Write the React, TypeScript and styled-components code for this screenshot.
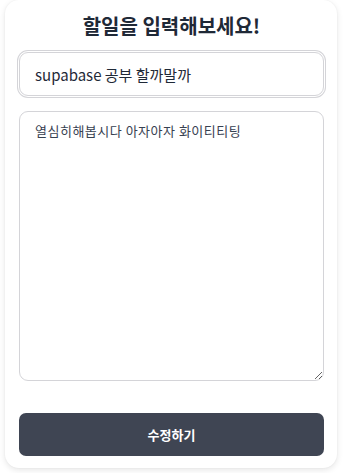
import React from "react";
import styled, { createGlobalStyle } from "styled-components";

const Global = createGlobalStyle`
  html, body { margin: 0; padding: 0; background: #ffffff; }
  body { font-family: "Noto Sans CJK KR", "Noto Sans", sans-serif; }
  * { box-sizing: border-box; }
`;

const Page = styled.div`
  padding: 0 7px 5px 5px;
`;

const Card = styled.form`
  display: flex;
  flex-direction: column;
  background: #ffffff;
  border-radius: 14px;
  box-shadow: 0 2px 6px rgba(0, 0, 0, 0.1), 0 0 2px rgba(0, 0, 0, 0.05);
  padding: 12px 13px 12px 14px;
`;

const Title = styled.h1`
  margin: 0 0 12px;
  font-size: 20px;
  line-height: 28px;
  font-weight: 700;
  color: #1f2937;
  text-align: center;
`;

const TitleInput = styled.input`
  height: 44px;
  width: 100%;
  border: 1px solid #d4d4d8;
  border-radius: 9px;
  padding: 0 15px;
  font-family: inherit;
  font-size: 15px;
  color: #1f2937;
  outline: none;
  box-shadow: 0 0 0 1px #ffffff, 0 0 0 2px #d4d4d8;
`;

const Body = styled.textarea`
  margin-top: 15px;
  height: 270px;
  width: 100%;
  border: 1px solid #d4d4d8;
  border-radius: 9px;
  padding: 10px 15px;
  font-family: inherit;
  font-size: 13px;
  letter-spacing: 0.5px;
  line-height: 18px;
  color: #374151;
  outline: none;
  resize: vertical;
`;

const Submit = styled.button`
  margin-top: 32px;
  height: 43px;
  width: 100%;
  border: none;
  border-radius: 7px;
  background: #3f4553;
  color: #ffffff;
  font-family: inherit;
  font-size: 13px;
  font-weight: 700;
  cursor: pointer;
`;

export default function App() {
  return (
    <Page>
      <Global />
      <Card onSubmit={(e) => e.preventDefault()}>
        <Title>할일을 입력해보세요!</Title>
        <TitleInput defaultValue="supabase 공부 할까말까" />
        <Body defaultValue="열심히해봅시다 아자아자 화이티티팅" />
        <Submit type="submit">수정하기</Submit>
      </Card>
    </Page>
  );
}
